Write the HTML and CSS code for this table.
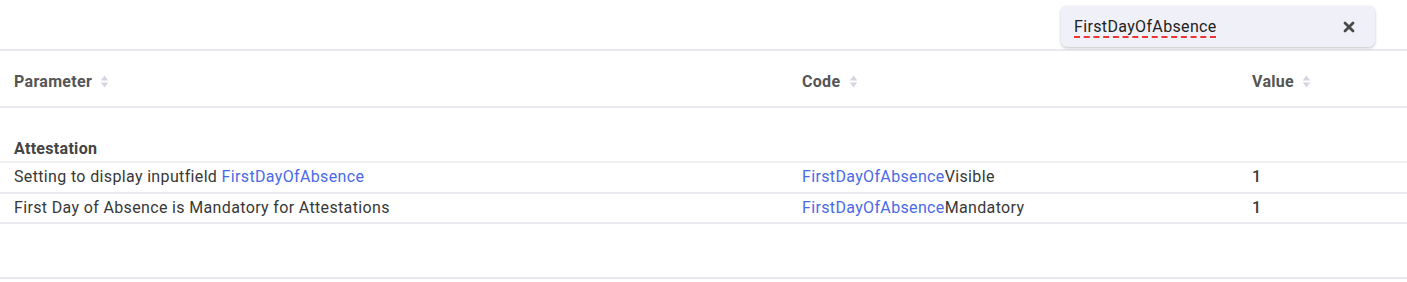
FILE: index.html
```html
<!DOCTYPE html>
<html>
<head>
<meta charset="utf-8">
<link rel="stylesheet" href="styles.css">
</head>
<body>
<div class="page">
  <div class="toolbar">
    <div class="search">
      <span class="search-text">FirstDayOfAbsence</span>
      <svg class="clear" width="12" height="12" viewBox="0 0 12 12"><path d="M2 2 L10 10 M10 2 L2 10" stroke="#4a4a4a" stroke-width="2.8" stroke-linecap="round"/></svg>
    </div>
  </div>
  <div class="table">
    <div class="row head">
      <div class="c1">Parameter <span class="sort"><svg width="9" height="13" viewBox="0 0 8 12"><path d="M4 0.5 L7.5 5 L0.5 5 Z M4 11.5 L7.5 7 L0.5 7 Z" fill="#d6d6e2"/></svg></span></div>
      <div class="c2">Code <span class="sort"><svg width="9" height="13" viewBox="0 0 8 12"><path d="M4 0.5 L7.5 5 L0.5 5 Z M4 11.5 L7.5 7 L0.5 7 Z" fill="#d6d6e2"/></svg></span></div>
      <div class="c3">Value <span class="sort"><svg width="9" height="13" viewBox="0 0 8 12"><path d="M4 0.5 L7.5 5 L0.5 5 Z M4 11.5 L7.5 7 L0.5 7 Z" fill="#d6d6e2"/></svg></span></div>
    </div>
    <div class="group">Attestation</div>
    <div class="row item first">
      <div class="c1">Setting to display inputfield <span class="hl">FirstDayOfAbsence</span></div>
      <div class="c2"><span class="hl">FirstDayOfAbsence</span>Visible</div>
      <div class="c3 num">1</div>
    </div>
    <div class="row item">
      <div class="c1">First Day of Absence is Mandatory for Attestations</div>
      <div class="c2"><span class="hl">FirstDayOfAbsence</span>Mandatory</div>
      <div class="c3 num">1</div>
    </div>
    <div class="spacer"></div>
  </div>
</div>
</body>
</html>
```
FILE: styles.css
```css
html, body {
  margin: 0;
  padding: 0;
  background: #fff;
}
.page {
  font-family: Roboto, "Liberation Sans", sans-serif;
  font-size: 16px;
  color: #383838;
  letter-spacing: 0.35px;
  width: 1407px;
}
.toolbar {
  height: 51px;
  box-sizing: border-box;
  border-bottom: 2px solid #e8e8ef;
  display: flex;
  justify-content: flex-end;
  align-items: flex-start;
  padding-right: 32px;
}
.search {
  margin-top: 6px;
  width: 314px;
  height: 41px;
  box-sizing: border-box;
  background: #f0f0f8;
  border-radius: 6px;
  box-shadow: 0 1px 3px rgba(0,0,0,0.25);
  display: flex;
  align-items: center;
  justify-content: space-between;
  padding: 0 20px 0 13px;
}
.search-text {
  color: #222;
  text-decoration: underline dashed #e33;
  text-decoration-thickness: 1.5px;
  text-underline-offset: 4px;
}
.clear { display: block; }
.row {
  display: grid;
  grid-template-columns: 788px 450px 1fr;
  padding-left: 14px;
  align-items: center;
  box-sizing: border-box;
}
.head {
  height: 57px;
  padding-top: 5px;
  border-bottom: 2px solid #e8e8ef;
  font-weight: bold;
  color: #555;
  letter-spacing: 0.3px;
}
.sort { display: inline-block; margin-left: 4px; vertical-align: -1px; }
.sort svg { display: block; }
.group {
  box-sizing: border-box;
  height: 55px;
  padding: 31px 0 0 14px;
  font-weight: bold;
  color: #444;
  letter-spacing: 0.3px;
  border-bottom: 2px solid #f0f0f5;
}
.item {
  height: 30px;
  padding-bottom: 2px;
  border-bottom: 2px solid #eaeaf0;
}
.item.first { height: 31px; }
.num { font-weight: 500; }
.hl { color: #4a6ae8; }
.spacer {
  height: 55px;
  box-sizing: border-box;
  border-bottom: 2px solid #e8e8ef;
}
```
